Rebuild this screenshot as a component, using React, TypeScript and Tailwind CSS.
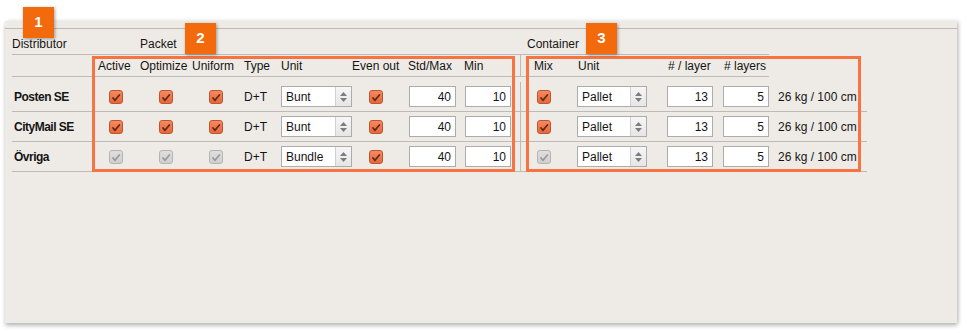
import React from 'react';

type Row = { name: string; unit: string; enabled: boolean };

const rows: Row[] = [
  { name: 'Posten SE', unit: 'Bunt', enabled: true },
  { name: 'CityMail SE', unit: 'Bunt', enabled: true },
  { name: 'Övriga', unit: 'Bundle', enabled: false },
];

function Check({ on }: { on: boolean }) {
  return (
    <div
      className={
        on
          ? 'w-[14px] h-[14px] rounded-[3px] border border-[#bd5530] bg-gradient-to-b from-[#f7895f] to-[#e8663a] flex items-center justify-center'
          : 'w-[14px] h-[14px] rounded-[3px] border border-[#b4b4b4] bg-gradient-to-b from-[#dedede] to-[#cfcfcf] flex items-center justify-center'
      }
    >
      <svg width="10" height="10" viewBox="0 0 10 10">
        <path
          d="M2 6 L4 8.3 L8.4 3"
          fill="none"
          stroke={on ? '#5e2a16' : '#9a9a9a'}
          strokeWidth="1.8"
          strokeLinecap="round"
          strokeLinejoin="round"
        />
      </svg>
    </div>
  );
}

function Select({ value, w }: { value: string; w: string }) {
  return (
    <div className={`${w} h-[21px] bg-white border border-[#acacac] flex`}>
      <div className="flex-1 pl-[4px] flex items-center leading-none">{value}</div>
      <div className="w-[16px] border-l border-[#d0d0d0] bg-gradient-to-b from-[#f6f6f6] to-[#e6e6e6] flex flex-col items-center justify-center gap-[2px]">
        <svg width="7" height="4" viewBox="0 0 7 4">
          <path d="M0 4 L3.5 0 L7 4 Z" fill="#7d7d7d" />
        </svg>
        <svg width="7" height="4" viewBox="0 0 7 4">
          <path d="M0 0 L3.5 4 L7 0 Z" fill="#7d7d7d" />
        </svg>
      </div>
    </div>
  );
}

function Num({ value, w }: { value: string; w: string }) {
  return (
    <div className={`${w} h-[21px] bg-white border border-[#acacac] flex items-center justify-end pr-[4px] leading-none`}>
      {value}
    </div>
  );
}

function Badge({ n, cls }: { n: string; cls: string }) {
  return (
    <div
      className={`absolute ${cls} w-[31px] h-[31px] bg-[#f26a0c] text-white font-bold text-[15px] flex items-center justify-center shadow-[1px_1px_3px_rgba(0,0,0,0.35)]`}
    >
      {n}
    </div>
  );
}

export default function App() {
  const line = 'border-b border-[#bebbb6]';
  return (
    <div
      className="relative w-[967px] h-[333px] bg-white overflow-hidden text-[12px] text-[#151515]"
      style={{ fontFamily: '"Liberation Sans", Arial, sans-serif' }}
    >
      {/* panel */}
      <div className="absolute left-[5px] top-[21px] w-[952px] h-[302px] bg-[#eeebe6] shadow-[0px_3px_4px_rgba(0,0,0,0.22),2px_0px_4px_rgba(0,0,0,0.15)]">
        <div className="mt-[7px] border-t border-[#bcb9b4]" />

        <div className="ml-[7px] flex flex-col">
          {/* group labels */}
          <div className="flex h-[26px] items-end">
            <div className={`w-[83px] h-full flex items-end pb-[1px] ${line}`}>Distributor</div>
            <div className={`w-[426px] h-full flex items-end pb-[1px] pl-[45px] ${line}`}>Packet</div>
            <div className={`w-[248px] h-full flex items-end pb-[1px] pl-[6px] ${line}`}>Container</div>
          </div>

          {/* headers */}
          <div className="flex h-[22px]">
            <div className={`w-[83px] ${line}`} />
            <div className={`w-[42px] pl-[3px] flex items-center ${line}`}>Active</div>
            <div className={`w-[52px] pl-[3px] flex items-center ${line}`}>Optimize</div>
            <div className={`w-[52px] pl-[3px] flex items-center ${line}`}>Uniform</div>
            <div className={`w-[37px] pl-[3px] flex items-center ${line}`}>Type</div>
            <div className={`w-[74px] pl-[3px] flex items-center ${line}`}>Unit</div>
            <div className={`w-[53px] flex items-center ${line}`}>Even out</div>
            <div className={`w-[56px] pl-[3px] flex items-center ${line}`}>Std/Max</div>
            <div className={`w-[54px] pl-[3px] flex items-center ${line}`}>Min</div>
            <div className={`w-[6px] border-r border-[#bebbb6] ${line}`} />
            <div className={`w-[49px] pl-[13px] flex items-center ${line}`}>Mix</div>
            <div className={`w-[90px] pl-[8px] flex items-center ${line}`}>Unit</div>
            <div className={`w-[58px] pl-[8px] flex items-center ${line}`}># / layer</div>
            <div className={`w-[51px] pl-[6px] flex items-center ${line}`}># layers</div>
          </div>

          {/* data rows */}
          {rows.map((r, i) => (
            <div key={i} className={`flex ${i === 0 ? 'h-[35px] pt-[5px]' : 'h-[30px]'} ${line} w-[855px]`}>
              <div className="w-[83px] pl-[2px] flex items-center font-bold text-[12px] tracking-[-0.5px]">{r.name}</div>
              <div className="w-[42px] pl-[14px] flex items-center"><Check on={r.enabled} /></div>
              <div className="w-[52px] pl-[22px] flex items-center"><Check on={r.enabled} /></div>
              <div className="w-[52px] pl-[20px] flex items-center"><Check on={r.enabled} /></div>
              <div className="w-[37px] pl-[3px] flex items-center">D+T</div>
              <div className="w-[74px] pl-[3px] flex items-center"><Select value={r.unit} w="w-[71px]" /></div>
              <div className="w-[53px] pl-[17px] flex items-center"><Check on /></div>
              <div className="w-[56px] pl-[4px] flex items-center"><Num value="40" w="w-[47px]" /></div>
              <div className="w-[54px] pl-[4px] flex items-center"><Num value="10" w="w-[46px]" /></div>
              <div className="w-[6px] border-r border-[#bebbb6]" />
              <div className="w-[49px] pl-[16px] flex items-center"><Check on={r.enabled} /></div>
              <div className="w-[90px] pl-[7px] flex items-center"><Select value="Pallet" w="w-[70px]" /></div>
              <div className="w-[58px] pl-[7px] flex items-center"><Num value="13" w="w-[46px]" /></div>
              <div className="w-[51px] pl-[5px] flex items-center"><Num value="5" w="w-[46px]" /></div>
              <div className="w-[98px] pl-[9px] flex items-center">26 kg / 100 cm</div>
            </div>
          ))}
        </div>
      </div>

      {/* annotation frames */}
      <div className="absolute left-[92px] top-[56px] w-[423px] h-[116px] border-[3px] border-[#f77442]" />
      <div className="absolute left-[526px] top-[56px] w-[335px] h-[116px] border-[3px] border-[#f77442]" />

      <Badge n="1" cls="left-[23px] top-[7px]" />
      <Badge n="2" cls="left-[185px] top-[23px]" />
      <Badge n="3" cls="left-[586px] top-[23px]" />
    </div>
  );
}
